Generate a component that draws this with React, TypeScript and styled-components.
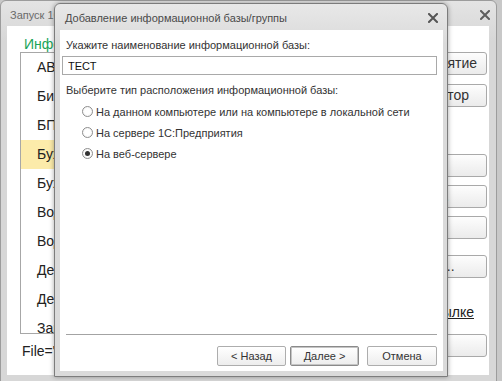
import React from 'react';
import styled, { createGlobalStyle } from 'styled-components';

const GlobalStyle = createGlobalStyle`
  body {
    margin: 0;
    background: #c8c8c8;
  }
`;

const Desktop = styled.div`
  position: relative;
  width: 502px;
  height: 381px;
  overflow: hidden;
  background: #c8c8c8;
  font-family: 'Liberation Sans', Arial, sans-serif;
`;

/* windows sit on the desktop, so they are placed absolutely */
const BackWindow = styled.div`
  position: absolute;
  left: 0;
  top: 0;
  width: 497px;
  height: 383px;
  box-sizing: border-box;
  border: 1px solid #9c9c9c;
  border-radius: 6px 6px 0 0;
  background: linear-gradient(#e4e4e4, #d7d7d7 40px, #d7d7d7);
  padding: 0 7px 7px 6px;
  display: flex;
  flex-direction: column;
`;

const TitleBar = styled.div`
  height: 25px;
  flex-shrink: 0;
  display: flex;
  align-items: center;
  justify-content: space-between;
  padding: 2px 0 0 3px;
  box-sizing: border-box;
  font-size: 11px;
  color: #6a6a6a;
  white-space: nowrap;
`;

const CloseIcon = ({ color }: { color: string }) => (
  <svg width="10" height="10" viewBox="0 0 10 10">
    <path d="M1 1 L9 9 M9 1 L1 9" stroke={color} strokeWidth="2" strokeLinecap="square" />
  </svg>
);

const BackClose = styled.div`
  margin-right: -1px;
  display: flex;
`;

const BackContent = styled.div`
  flex: 1;
  background: #fff;
  display: flex;
  padding: 10px 2px 0 13px;
`;

const LeftCol = styled.div`
  width: 340px;
  display: flex;
  flex-direction: column;
`;

const GreenLabel = styled.div`
  height: 16px;
  line-height: 16px;
  padding-left: 4px;
  font-size: 14px;
  color: #1aa55a;
  white-space: nowrap;
`;

const ListBox = styled.div`
  height: 282px;
  box-sizing: border-box;
  border: 1px solid #a7a7a7;
  overflow: hidden;
`;

const ListItem = styled.div<{ $selected?: boolean }>`
  height: 29px;
  line-height: 29px;
  padding-left: 16px;
  font-size: 14px;
  color: #222;
  white-space: nowrap;
  background: ${(p) => (p.$selected ? '#fcebaa' : 'transparent')};
`;

const FileText = styled.div`
  margin-top: 9px;
  line-height: 16px;
  padding-left: 2px;
  font-size: 14px;
  color: #222;
  white-space: nowrap;
`;

const RightCol = styled.div`
  width: 120px;
  margin-left: auto;
  padding-top: 16px;
  display: flex;
  flex-direction: column;
`;

const BackButton = styled.div<{ $top: number; $left?: boolean }>`
  margin-top: ${(p) => p.$top}px;
  height: 23px;
  line-height: 21px;
  box-sizing: border-box;
  border: 1px solid #a9a9a9;
  border-radius: 3px;
  background: linear-gradient(#fdfdfd, #ebebeb);
  font-size: 14px;
  color: #333;
  white-space: nowrap;
  overflow: hidden;
  text-align: ${(p) => (p.$left ? 'left' : 'center')};
  padding: ${(p) => (p.$left ? '0 0 0 6px' : '0 8px 0 0')};
`;

const LinkText = styled.div`
  margin-top: 26px;
  line-height: 16px;
  text-align: right;
  padding-right: 13px;
  font-size: 14px;
  color: #222;
  text-decoration: underline;
  white-space: nowrap;
`;

const Dialog = styled.div`
  position: absolute;
  left: 54px;
  top: 3px;
  width: 394px;
  height: 374px;
  box-sizing: border-box;
  border: 1px solid #7c7c7c;
  border-radius: 6px 6px 0 0;
  background: linear-gradient(#e8e8e8, #dadada 40px, #dadada);
  box-shadow: 0 0 5px rgba(0, 0, 0, 0.35);
  padding: 0 4px 5px 5px;
  display: flex;
  flex-direction: column;
`;

const DialogTitle = styled(TitleBar)`
  height: 26px;
  padding: 1px 5px 0 5px;
  color: #4a4a4a;
`;

const DialogBody = styled.div`
  flex: 1;
  background: #fff;
  display: flex;
  flex-direction: column;
  padding: 8px 6px 5px 2px;
  font-size: 11px;
  color: #333;
  white-space: nowrap;
`;

const FieldLabel = styled.div<{ $top?: number }>`
  margin-top: ${(p) => p.$top ?? 0}px;
  line-height: 14px;
  padding-left: 4px;
`;

const NameInput = styled.input`
  margin-top: 4px;
  height: 19px;
  box-sizing: border-box;
  border: 1px solid #a9a9a9;
  padding: 0 0 0 5px;
  font-family: inherit;
  font-size: 11px;
  color: #111;
  outline: none;
`;

const RadioGroup = styled.div`
  margin-top: 4px;
  display: flex;
  flex-direction: column;
`;

const RadioRow = styled.div`
  height: 21px;
  display: flex;
  align-items: center;
  gap: 3px;
  padding-left: 20px;
`;

const RadioCircle = styled.span<{ $checked?: boolean }>`
  width: 11px;
  height: 11px;
  flex-shrink: 0;
  box-sizing: border-box;
  border: 1px solid #8e8e8e;
  border-radius: 50%;
  background: radial-gradient(circle, #ffffff 40%, #ededed);
  display: flex;
  align-items: center;
  justify-content: center;

  &::after {
    content: '';
    display: ${(p) => (p.$checked ? 'block' : 'none')};
    width: 5px;
    height: 5px;
    border-radius: 50%;
    background: #333;
  }
`;

const Spacer = styled.div`
  flex: 1;
`;

const Separator = styled.div`
  height: 1px;
  margin-left: 4px;
  background: #a3a3a3;
`;

const ButtonRow = styled.div`
  margin-top: 11px;
  display: flex;
  justify-content: flex-end;
  gap: 4px;
`;

const DialogButton = styled.div<{ $default?: boolean; $width: number }>`
  width: ${(p) => p.$width}px;
  height: 20px;
  box-sizing: border-box;
  border: 1px solid ${(p) => (p.$default ? '#8a8a8a' : '#adadad')};
  box-shadow: ${(p) => (p.$default ? 'inset 0 0 0 1px #c4c4c4' : 'none')};
  border-radius: 2px;
  background: linear-gradient(#ffffff, #ededed);
  display: flex;
  align-items: center;
  justify-content: center;
  font-size: 11px;
  color: #333;
`;

const CancelButton = styled(DialogButton)`
  margin-left: 4px;
`;

const bases = [
  'АВС Учёт',
  'Бизнес-процессы',
  'БП 3.0',
  'Бухгалтерия предприятия',
  'Бухгалтерия предприятия (демо)',
  'Водоканал',
  'Водоснабжение',
  'Демо',
  'Демонстрационная база',
  'Зарплата и управление персоналом',
];

const locations = [
  'На данном компьютере или на компьютере в локальной сети',
  'На сервере 1С:Предприятия',
  'На веб-сервере',
];

export default function App() {
  return (
    <Desktop>
      <GlobalStyle />

      <BackWindow>
        <TitleBar>
          <span>Запуск 1С:Предприятия</span>
          <BackClose>
            <CloseIcon color="#5e5e5e" />
          </BackClose>
        </TitleBar>
        <BackContent>
          <LeftCol>
            <GreenLabel>Информационные базы</GreenLabel>
            <ListBox>
              {bases.map((b, i) => (
                <ListItem key={i} $selected={i === 3}>
                  {b}
                </ListItem>
              ))}
            </ListBox>
            <FileText>File="C:\Users\1C\Documents\Base";</FileText>
          </LeftCol>
          <RightCol>
            <BackButton $top={0}>1С:Предприятие</BackButton>
            <BackButton $top={9}>Конфигуратор</BackButton>
            <BackButton $top={47} $left>Добавить...</BackButton>
            <BackButton $top={8} $left>Изменить...</BackButton>
            <BackButton $top={8} $left>Удалить</BackButton>
            <BackButton $top={16} $left>Настройка...</BackButton>
            <LinkText>по ссылке</LinkText>
            <BackButton $top={14}>Выход</BackButton>
          </RightCol>
        </BackContent>
      </BackWindow>

      <Dialog>
        <DialogTitle>
          <span>Добавление информационной базы/группы</span>
          <CloseIcon color="#555" />
        </DialogTitle>
        <DialogBody>
          <FieldLabel>Укажите наименование информационной базы:</FieldLabel>
          <NameInput defaultValue="ТЕСТ" readOnly />
          <FieldLabel $top={8}>Выберите тип расположения информационной базы:</FieldLabel>
          <RadioGroup>
            {locations.map((l, i) => (
              <RadioRow key={i}>
                <RadioCircle $checked={i === 2} />
                <span>{l}</span>
              </RadioRow>
            ))}
          </RadioGroup>
          <Spacer />
          <Separator />
          <ButtonRow>
            <DialogButton $width={69}>&lt; Назад</DialogButton>
            <DialogButton $width={69} $default>
              Далее &gt;
            </DialogButton>
            <CancelButton $width={70}>Отмена</CancelButton>
          </ButtonRow>
        </DialogBody>
      </Dialog>
    </Desktop>
  );
}
